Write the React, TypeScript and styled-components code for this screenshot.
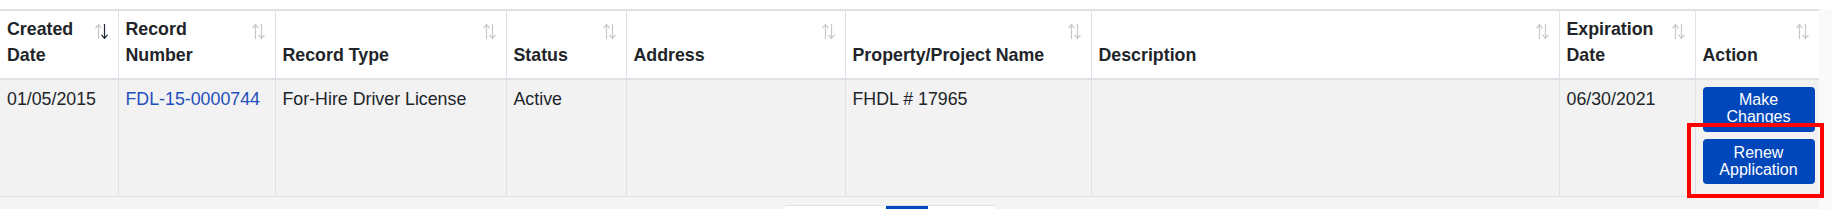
import React from "react";
import styled, { createGlobalStyle } from "styled-components";

const GlobalStyle = createGlobalStyle`
  html, body { margin: 0; padding: 0; background: #ffffff; }
  body { font-family: "Liberation Sans", Arial, sans-serif; color: #212529; }
  * { box-sizing: border-box; }
`;

const Page = styled.div`
  width: 1832px;
  display: flex;
  flex-direction: column;
`;

const TopStrip = styled.div`
  height: 9px;
  background: #ffffff;
`;

const Body = styled.div`
  display: flex;
  background: #f5f5f5;
`;

const Main = styled.div`
  width: 1819px;
  display: flex;
  flex-direction: column;
`;

const Gutter = styled.div`
  flex: 1;
  background: #fafafa;
`;

const Table = styled.table`
  width: 1819px;
  table-layout: fixed;
  border-collapse: collapse;
  font-size: 17.8px;
  line-height: 26.25px;
  border-top: 2px solid #dee2e6;
  border-right: 1px solid #dee2e6;
`;

const HeadRow = styled.tr`
  background: #ffffff;
  border-bottom: 2px solid #dee2e6;
`;

const Th = styled.th`
  padding: 5px 7px 9px 7px;
  text-align: left;
  font-weight: 700;
  color: #212529;
  vertical-align: bottom;
  border-left: 1px solid #dee2e6;
  &:first-child { border-left: none; }
`;

const ThInner = styled.div`
  display: flex;
  align-items: flex-end;
  justify-content: space-between;
  gap: 4px;
  min-height: 52.5px;
`;

const ThLabel = styled.span`
  display: block;
`;

const SortWrap = styled.span`
  align-self: flex-start;
  margin-top: 7px;
  margin-right: 3px;
  flex: none;
  display: flex;
`;

const DataRow = styled.tr`
  background: #f2f2f2;
  border-bottom: 1px solid #e2e2e2;
`;

const Td = styled.td<{ $action?: boolean }>`
  padding: ${(p) => (p.$action ? "7px 6px 12px 7px" : "6px 7px")};
  vertical-align: top;
  color: #212529;
  border-left: 1px solid #dee2e6;
  &:first-child { border-left: none; }
`;

const RecordLink = styled.a`
  color: #1f4fbd;
  text-decoration: none;
`;

const Actions = styled.div`
  display: flex;
  flex-direction: column;
  gap: 7.5px;
`;

const ActionButton = styled.button`
  display: block;
  width: 112px;
  height: 45px;
  padding: 5.5px 6px;
  border: none;
  border-radius: 4px;
  background: #0047bb;
  color: #ffffff;
  font-family: "Liberation Sans", Arial, sans-serif;
  font-size: 16px;
  line-height: 16.8px;
  text-align: center;
  overflow: hidden;
  cursor: pointer;
`;

const Highlight = styled.div`
  position: relative;
  &::after {
    content: "";
    position: absolute;
    top: -16px;
    left: -16px;
    right: -11px;
    bottom: -14px;
    border: 4px solid #ff0000;
    pointer-events: none;
  }
`;

const Footer = styled.div`
  display: flex;
  justify-content: center;
  padding: 8px 0 20px 0;
`;

const Pager = styled.div`
  display: flex;
  margin-right: 40px;
  border: 1px solid #dee2e6;
  border-radius: 4px;
  overflow: hidden;
  background: #ffffff;
`;

const PageBtn = styled.span<{ $active?: boolean; $w: number }>`
  display: block;
  width: ${(p) => p.$w}px;
  height: 40px;
  padding-top: 12px;
  background: ${(p) => (p.$active ? "#0047bb" : "#ffffff")};
  color: ${(p) => (p.$active ? "#ffffff" : "#0047bb")};
  font-size: 15px;
  line-height: 18px;
  text-align: center;
`;

type SortState = "none" | "desc";

const SortIcon: React.FC<{ state?: SortState }> = ({ state = "none" }) => {
  const light = "#c6c8cc";
  const down = state === "desc" ? "#1d2533" : light;
  return (
    <svg width="13" height="17" viewBox="0 0 13 17" fill="none">
      <g stroke={light} strokeWidth="1.2" strokeLinecap="round" strokeLinejoin="round">
        <line x1="3.5" y1="1.8" x2="3.5" y2="15.5" />
        <polyline points="0.8,4.8 3.5,1.6 6.2,4.8" />
      </g>
      <g stroke={down} strokeWidth="1.2" strokeLinecap="round" strokeLinejoin="round">
        <line x1="9.5" y1="1.5" x2="9.5" y2="15.2" />
        <polyline points="6.8,12.2 9.5,15.4 12.2,12.2" />
      </g>
    </svg>
  );
};

const columns: { label: string; width: number; sort?: SortState }[] = [
  { label: "Created Date", width: 118, sort: "desc" },
  { label: "Record Number", width: 157 },
  { label: "Record Type", width: 231 },
  { label: "Status", width: 120 },
  { label: "Address", width: 219 },
  { label: "Property/Project Name", width: 246 },
  { label: "Description", width: 468 },
  { label: "Expiration Date", width: 136 },
  { label: "Action", width: 124 },
];

export default function App() {
  return (
    <Page>
      <GlobalStyle />
      <TopStrip />
      <Body>
        <Main>
          <Table>
            <colgroup>
              {columns.map((c) => (
                <col key={c.label} style={{ width: c.width }} />
              ))}
            </colgroup>
            <thead>
              <HeadRow>
                {columns.map((c) => (
                  <Th key={c.label}>
                    <ThInner>
                      <ThLabel>{c.label}</ThLabel>
                      <SortWrap>
                        <SortIcon state={c.sort} />
                      </SortWrap>
                    </ThInner>
                  </Th>
                ))}
              </HeadRow>
            </thead>
            <tbody>
              <DataRow>
                <Td>01/05/2015</Td>
                <Td>
                  <RecordLink href="#">FDL-15-0000744</RecordLink>
                </Td>
                <Td>For-Hire Driver License</Td>
                <Td>Active</Td>
                <Td></Td>
                <Td>FHDL # 17965</Td>
                <Td></Td>
                <Td>06/30/2021</Td>
                <Td $action>
                  <Actions>
                    <ActionButton>Make Changes</ActionButton>
                    <Highlight>
                      <ActionButton>Renew Application</ActionButton>
                    </Highlight>
                  </Actions>
                </Td>
              </DataRow>
            </tbody>
          </Table>
          <Footer>
            <Pager>
              <PageBtn $w={102}>Previous</PageBtn>
              <PageBtn $w={42} $active>
                1
              </PageBtn>
              <PageBtn $w={68}>Next</PageBtn>
            </Pager>
          </Footer>
        </Main>
        <Gutter />
      </Body>
    </Page>
  );
}
